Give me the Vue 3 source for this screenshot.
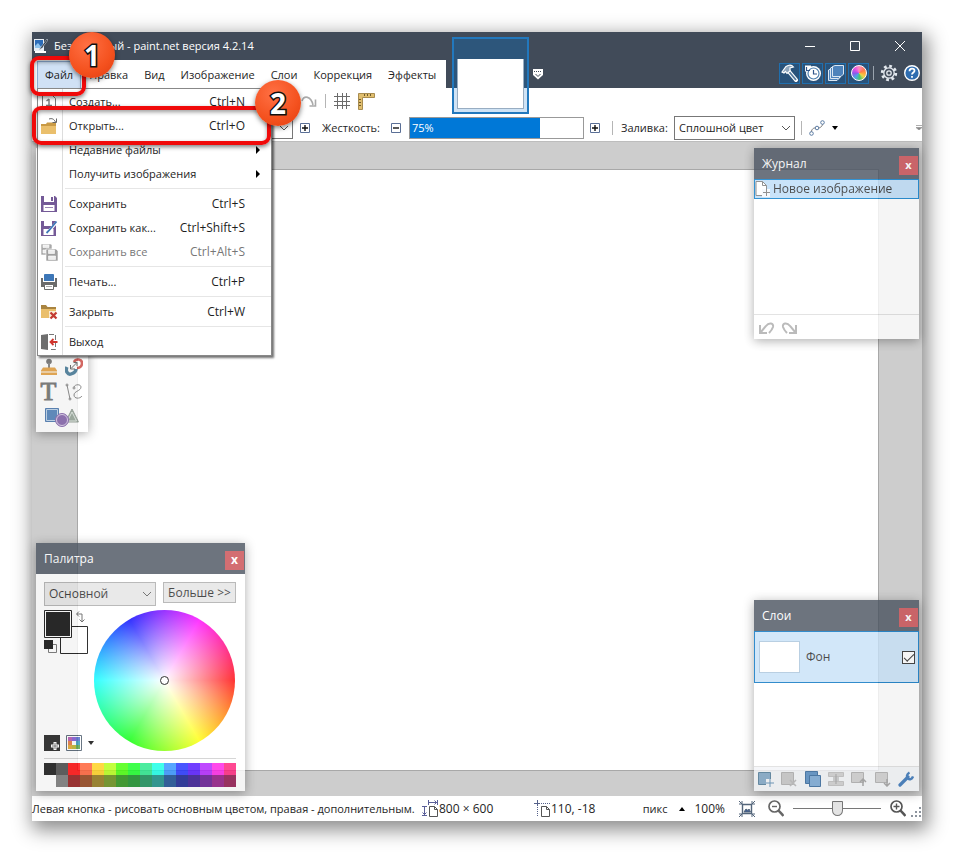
<script setup>
import { ref } from 'vue'

const menus = ['Правка', 'Вид', 'Изображение', 'Слои', 'Коррекция', 'Эффекты']

const fileMenu = [
  { icon: 'new', label: 'Создать...', keys: 'Ctrl+N' },
  { icon: 'open', label: 'Открыть...', keys: 'Ctrl+O' },
  { label: 'Недавние файлы', sub: true },
  { label: 'Получить изображения', sub: true },
  { sep: true },
  { icon: 'save', label: 'Сохранить', keys: 'Ctrl+S' },
  { icon: 'saveAs', label: 'Сохранить как...', keys: 'Ctrl+Shift+S' },
  { icon: 'saveAll', label: 'Сохранить все', keys: 'Ctrl+Alt+S', off: true },
  { sep: true },
  { icon: 'print', label: 'Печать...', keys: 'Ctrl+P' },
  { sep: true },
  { icon: 'close', label: 'Закрыть', keys: 'Ctrl+W' },
  { sep: true },
  { icon: 'exit', label: 'Выход' },
]

const brightRow = ['#0a0a0a', '#404040', '#ff0000', '#ff5a2e', '#ffd016', '#b4ff10', '#40ff00', '#10ff20', '#20e888', '#10ffe6', '#2e90ff', '#1c2cff', '#5010ff', '#b01cff', '#ff1ce6', '#ff1c78']
const darkRow = ['', '#707070', '#8c0c0c', '#8c380c', '#8c700c', '#60880c', '#208c0c', '#0c881c', '#0c8850', '#0c8880', '#0c448c', '#0c188c', '#2c0c8c', '#5c0c8c', '#8c0c7c', '#8c0c44']

const hardness = ref(75)
const zoom = ref(50)
const visible = ref(true)
</script>

<template>
  <div class="page">
    <div class="window">
      <header class="head">
        <div class="titlebar">
          <svg class="logo" width="14" height="16" viewBox="0 0 14 16">
            <rect x="0" y="1" width="10" height="12" fill="#e8eef5" />
            <rect x="1" y="2" width="8" height="8" fill="#2c6cb8" />
            <path d="M1 8l3-3 4 5H1z" fill="#8fc4ee" />
            <path d="M13 1L7 9l-2 3 3-2 6-8z" fill="#1c2430" stroke="#cfd8e2" stroke-width=".6" />
            <path d="M1 14h11" stroke="#fff" stroke-width="2" />
          </svg>
          <h1>Безымянный - paint.net версия 4.2.14</h1>
          <div class="winbtns">
            <button aria-label="Свернуть"><svg width="12" height="12" viewBox="0 0 12 12"><path d="M1 6.500h10" /></svg></button>
            <button aria-label="Развернуть"><svg width="12" height="12" viewBox="0 0 12 12"><path d="M1.500 1.500h9v9h-9z" /></svg></button>
            <button aria-label="Закрыть"><svg width="12" height="12" viewBox="0 0 12 12"><path d="M1 1l10 10M11 1L1 11" /></svg></button>
          </div>
        </div>

        <div class="menurow">
          <nav class="menubar">
            <div class="filewrap">
              <button class="mi active">Файл</button>
              <ul class="dropdown">
                <template v-for="(m, i) in fileMenu" :key="i">
                  <li v-if="m.sep" class="sep"></li>
                  <li v-else>
                    <button class="row" :disabled="m.off">
                      <span class="ico">
                        <svg v-if="m.icon" width="18" height="18" viewBox="0 0 18 18">
                          <g v-if="m.icon === 'new'" fill="none" stroke="#777"><path d="M2.500 1.500h9l4 4v11h-13z" /><path d="M9 6v6M6 12.500h6M6.500 8L9 6" stroke-width="1.400" /></g>
                          <g v-else-if="m.icon === 'open'">
                            <path d="M1 7h5l1-1.500h9V17H1z" fill="#c99a45" /><path d="M1 9h15v8H1z" fill="#eabf6c" />
                            <path d="M9 2c3-1 5 0 6.500 3M16.500 1.500v4h-4" fill="none" stroke="#666" />
                          </g>
                          <g v-else-if="m.icon === 'save'">
                            <path d="M1 1h14l2 2v14H1z" fill="#745a97" /><path d="M4 1h10v6H4z" fill="#fff" /><path d="M11 2h2v4h-2z" fill="#745a97" /><path d="M3.500 10h11v6h-11z" fill="#fff" /><path d="M5 12.500h8" stroke="#9a86b5" />
                          </g>
                          <g v-else-if="m.icon === 'saveAs'">
                            <path d="M1 2h15v15H1z" fill="#745a97" /><path d="M4 2h8v5H4zM3.500 10h10v6h-10z" fill="#fff" /><path d="M17 1L8 11l-2 4 4-2 8-9z" fill="#fff" /><path d="M16.500 2.500L9 11.500 6.500 14" stroke="#3f78b8" stroke-width="1.800" fill="none" />
                          </g>
                          <g v-else-if="m.icon === 'saveAll'" stroke="#fff" stroke-width=".6">
                            <path d="M1 1h10l1 1v10H1z" fill="#a8a8a8" /><path d="M3 2h6v2.500H3zM3 7h6v3H3z" fill="#eee" /><path d="M6 6h10l2 2v10H6z" fill="#a0a0a0" /><path d="M8.500 7h6v3.500h-6zM8.500 13h7v3.500h-7z" fill="#eee" />
                          </g>
                          <g v-else-if="m.icon === 'print'">
                            <path d="M4 1.500L5 1h8l1 .5V8H4z" fill="#3d77b8" /><path d="M1 5h2v4h12V5h2v9H1z" fill="#6b6b6b" /><path d="M4.500 11.500h9v5h-9z" fill="#fff" stroke="#6b6b6b" /><path d="M6 13.500h6" stroke="#aaa" />
                          </g>
                          <g v-else-if="m.icon === 'close'">
                            <path d="M1 2h5l1.500 2H16v3H1z" fill="#a98440" /><path d="M1 6h15v9H1z" fill="#eabf6c" /><path d="M9 8h9v9H9z" fill="#fff" opacity=".7" /><path d="M10.500 9.500l6 6M16.500 9.500l-6 6" stroke="#c33a32" stroke-width="2.200" />
                          </g>
                          <g v-else>
                            <path d="M9 1.500h6.500v15H9" fill="none" stroke="#777" stroke-dasharray="5 2" /><path d="M1 2l7-1v16l-7-1z" fill="#6e6e6e" /><path d="M17.500 9H11M13.500 6L10.500 9l3 3" fill="none" stroke="#d0352d" stroke-width="1.800" />
                          </g>
                        </svg>
                      </span>
                      <span class="lbl">{{ m.label }}</span>
                      <span v-if="m.keys" class="keys">{{ m.keys }}</span>
                      <svg v-if="m.sub" class="arrow" width="6" height="8" viewBox="0 0 6 8"><path d="M1 0l4 4-4 4z" /></svg>
                    </button>
                  </li>
                </template>
              </ul>
            </div>
            <button v-for="m in menus" :key="m" class="mi">{{ m }}</button>
          </nav>

          <div class="thumb"><div class="thumbimg"></div></div>
          <button class="thumbmore" aria-label="Список изображений">
            <svg width="12" height="12" viewBox="0 0 12 12"><path d="M1 1h10v6l-5 4.500L1 7z" fill="#fff" /><path d="M2 3.500h8" stroke="#414b59" stroke-dasharray="1 1" /><path d="M3.500 6L6 8.500 8.500 6" stroke="#414b59" fill="none" /></svg>
          </button>

          <div class="utils">
            <button class="util on" aria-label="Инструменты"><svg width="18" height="18" viewBox="0 0 18 18"><path d="M7.500 7l7.500 9" stroke="#fff" stroke-width="4" stroke-linecap="round" /><path d="M7.500 7l7.500 9" stroke="#54789c" stroke-width="1.800" /><path d="M1 8l4-5.500c3-2 6-1.500 7.500.5L9 4v3L6 9.500 4.500 7.500 3 9z" fill="#8fa6bd" stroke="#fff" stroke-width="1.200" /></svg></button>
            <button class="util on" aria-label="Журнал"><svg width="18" height="18" viewBox="0 0 18 18"><circle cx="9.500" cy="9.500" r="7.500" fill="#fff" /><path d="M1 1.500h6v6H1z" fill="#fff" /><circle cx="9.500" cy="9.500" r="5.500" fill="#fff" stroke="#4d7fae" stroke-width="1.200" /><path d="M9.500 6v4h3.500M2.500 3v3.500h3.500" stroke="#31568a" stroke-width="1.200" fill="none" /></svg></button>
            <button class="util on" aria-label="Слои"><svg width="18" height="18" viewBox="0 0 18 18" stroke="#dbe7f3" stroke-width="1" fill="#4e83bb"><path d="M1.500 16.500V6L5 4.500h8v9l-3 3z" /><path d="M3.500 14.500V4L6.500 2.500h8v9l-3 3z" /><path d="M5.500 12.500V2.500L8 1.500h8.500v8.500L14 12.500z" /></svg></button>
            <button class="util on" aria-label="Палитра"><span class="miniwheel"></span></button>
            <i class="vsep light"></i>
            <button class="util" aria-label="Параметры"><svg width="18" height="18" viewBox="0 0 18 18" fill="none" stroke="#e4e9ef"><circle cx="9" cy="9" r="6.800" stroke-width="2.800" stroke-dasharray="2.700 2.640" /><circle cx="9" cy="9" r="5.200" stroke-width="1.300" /><circle cx="9" cy="9" r="2.200" stroke-width="1.300" /></svg></button>
            <button class="util" aria-label="Справка"><svg width="18" height="18" viewBox="0 0 18 18"><circle cx="9" cy="9" r="7.300" fill="#2f6db0" stroke="#fff" stroke-width="1.400" /><path d="M6.500 7.200c0-3.400 5-3.400 5-.5 0 1.800-2.500 1.800-2.500 3.800M9 12v1.800" fill="none" stroke="#fff" stroke-width="1.800" /></svg></button>
          </div>
        </div>
      </header>

      <div class="tools tools-a">
        <button class="tb" aria-label="Вернуть"><svg width="16" height="16" viewBox="0 0 16 16" fill="none" stroke="#aaa" stroke-width="1.600"><path d="M1 8c2-6 9-5 11 4M14.500 6.500V13H8.500" /></svg></button>
        <i class="vsep"></i>
        <button class="tb" aria-label="Сетка"><svg width="16" height="16" viewBox="0 0 16 16" fill="none" stroke="#6b6b6b"><path d="M3.500 0v16M8.500 0v16M12.500 0v16M0 3.500h16M0 8.500h16M0 12.500h16" /></svg></button>
        <button class="tb" aria-label="Линейки"><svg width="17" height="17" viewBox="0 0 17 17"><path d="M.5.5h16v4h-12v12h-4z" fill="#e0be6e" stroke="#a88c50" /><path d="M6.500 1v2M9.500 1v2M12.500 1v2M1 6.500h2M1 9.500h2M1 12.500h2" stroke="#6f5a2c" /></svg></button>
      </div>

      <div class="tools tools-b">
        <div class="sel brush">
          <select aria-label="Толщина кисти"><option>2</option></select>
          <svg width="10" height="6" viewBox="0 0 10 6"><path d="M1 1l4 4 4-4" /></svg>
        </div>
        <button class="pm" aria-label="Увеличить толщину"><svg width="10" height="10" viewBox="0 0 10 10"><path d="M.5.5h9v9h-9z" stroke="#5a6f96" /><path d="M2 5h6M5 2v6" stroke-width="1.400" /></svg></button>
        <label class="hl" for="hard">Жесткость:</label>
        <button class="pm" aria-label="Уменьшить жесткость"><svg width="10" height="10" viewBox="0 0 10 10"><path d="M.5.5h9v9h-9z" stroke="#5a6f96" /><path d="M2 5h6" stroke-width="1.400" /></svg></button>
        <div class="hard">
          <div class="hardfill" :style="{ width: hardness + '%' }"></div>
          <span>{{ hardness }}%</span>
          <input id="hard" v-model="hardness" type="range" min="0" max="100" />
        </div>
        <button class="pm" aria-label="Увеличить жесткость"><svg width="10" height="10" viewBox="0 0 10 10"><path d="M.5.5h9v9h-9z" stroke="#5a6f96" /><path d="M2 5h6M5 2v6" stroke-width="1.400" /></svg></button>
        <i class="vsep"></i>
        <label class="fl" for="fill">Заливка:</label>
        <div class="sel fillsel">
          <select id="fill"><option>Сплошной цвет</option></select>
          <svg width="10" height="6" viewBox="0 0 10 6"><path d="M1 1l4 4 4-4" /></svg>
        </div>
        <i class="vsep"></i>
        <button class="curve" aria-label="Сглаживание">
          <svg width="16" height="16" viewBox="0 0 16 16" fill="#fff" stroke="#5b7ba3"><path d="M2 13C3 7 6 8 8 8s5 0 6-5" fill="none" stroke="#777" /><circle cx="2.500" cy="13.500" r="1.800" /><circle cx="8" cy="8" r="1.800" /><circle cx="13.500" cy="2.500" r="1.800" /></svg>
          <svg width="6" height="4" viewBox="0 0 6 4"><path d="M0 0h6L3 4z" /></svg>
        </button>
        <svg class="overflow" width="6" height="5" viewBox="0 0 6 5"><path d="M0 .5h6M0 2.500h6L3 5z" stroke="#999" fill="#888" stroke-width=".8" /></svg>
      </div>

      <main class="workspace">
        <div class="canvas"></div>

        <section class="panel toolbox">
          <button aria-label="Штамп"><svg width="18" height="18" viewBox="0 0 18 18"><circle cx="9" cy="3.500" r="2.800" fill="#666" /><path d="M8 5h2v5H8z" fill="#777" /><path d="M3 9.500h12l2 3v1H1v-1zM1 14.500h16V17H1z" fill="#e39a35" /></svg></button>
          <button aria-label="Перекраска"><svg width="18" height="18" viewBox="0 0 18 18" fill="none"><path d="M9 4c2-4 8-3 8 1s-3 5-5 5" stroke="#c8423b" stroke-width="2.600" /><path d="M2 9c-2 4 1 8 4 7s5-3 5-5" stroke="#3b7292" stroke-width="3.400" /><path d="M6 10.500l6-6M12 8V4.500H8.500M5.500 7v4H10" stroke="#555" /></svg></button>
          <button class="ttool" aria-label="Текст">T</button>
          <button aria-label="Линия или кривая"><svg width="18" height="18" viewBox="0 0 18 18" fill="none" stroke="#777"><path d="M2 2l3 14M9 4c1-3 7-3 7 0 0 4-7 4-7 8 0 4 6 4 8 1" /><circle cx="2" cy="2" r="1" /><circle cx="5" cy="16" r="1" /><circle cx="9" cy="5" r="1" /></svg></button>
          <button class="wide" aria-label="Фигуры"><svg width="36" height="20" viewBox="0 0 36 20"><path d="M1.500 1.500h13v13h-13z" fill="#4479b5" stroke="#3d6ea8" /><path d="M2.500 2.500h11v11h-11z" fill="none" stroke="#b9d0e8" /><path d="M28 2l6.500 13h-13z" fill="#8fa092" stroke="#8a968c" /><path d="M28 5l4.500 9h-9z" fill="none" stroke="#dde5de" /><circle cx="18" cy="13" r="6.500" fill="#7d5aa6" stroke="#7d5aa6" /><circle cx="18" cy="13" r="5.500" fill="none" stroke="#d5c7e5" /></svg></button>
        </section>

        <section class="panel journal">
          <div class="phead"><h2>Журнал</h2><button class="x" aria-label="Закрыть журнал">x</button></div>
          <div class="hist">
            <svg width="16" height="18" viewBox="0 0 16 18"><path d="M1 1.500h6.500l4 4V15.500H1z" fill="#fff" stroke="#777" /><path d="M7.500 1.500v4h4" fill="none" stroke="#777" /><path d="M7 9h8v8H7z" fill="#f4f9fe" /><path d="M11.500 9v7M8 12.500h7" stroke="#777" /></svg>
            <span>Новое изображение</span>
          </div>
          <div class="pfoot jfoot">
            <button aria-label="Отменить"><svg width="17" height="14" viewBox="0 0 17 14"><path d="M2 4v8h7M2.500 11.500L8 5c3-4 8-3 7 1-1 3-2 4-4 6" /></svg></button>
            <button aria-label="Вернуть"><svg width="17" height="14" viewBox="0 0 17 14"><path d="M15 4v8H8M14.500 11.500L9 5C6 1 1 2 2 6c1 3 2 4 4 6" /></svg></button>
          </div>
        </section>

        <section class="panel palette">
          <div class="phead"><h2>Палитра</h2><button class="x" aria-label="Закрыть палитру">x</button></div>
          <div class="pbody">
            <div class="prow">
              <div class="sel basesel">
                <select aria-label="Цвет"><option>Основной</option></select>
                <svg width="10" height="6" viewBox="0 0 10 6"><path d="M1 1l4 4 4-4" /></svg>
              </div>
              <button class="more">Больше &gt;&gt;</button>
            </div>
            <div class="colors">
              <div class="pleft">
                <svg width="44" height="44" viewBox="0 0 44 44">
                  <path d="M16.500 16.500h27v27h-27z" fill="#fff" stroke="#000" />
                  <path d="M.5.5h27v27H.5z" fill="#fff" stroke="#000" /><path d="M2 2h24v24H2z" fill="#000" />
                  <path d="M4.500 34.500h8v8h-8z" fill="#fff" stroke="#666" /><path d="M0 30h9v9H0z" fill="#000" />
                  <path d="M33 4h5v8M35 1.500L32.500 4 35 6.500M35.500 9.500L38 12l2.500-2.500" fill="none" stroke="#555" />
                </svg>
                <div class="pactions">
                  <button aria-label="Добавить цвет"><svg width="16" height="16" viewBox="0 0 16 16"><path d="M0 0h16v16H0z" fill="#111" /><path d="M11 7v8M7 11h8" stroke="#fff" stroke-width="3" /><path d="M11 8v6M8 11h6" stroke="#666" /></svg></button>
                  <button aria-label="Палитры"><svg width="16" height="16" viewBox="0 0 16 16"><path d="M.5.5h15v15H.5z" fill="#fff" stroke="#456" /><path d="M2 2h4v4H2z" fill="#b04aa8" /><path d="M6 2h4v4H6z" fill="#7a4fd0" /><path d="M10 2h4v4h-4z" fill="#4a66c8" /><path d="M2 6h4v4H2z" fill="#e07030" /><path d="M10 6h4v4h-4z" fill="#2e93b8" /><path d="M2 10h4v4H2z" fill="#e0a020" /><path d="M6 10h4v4H6z" fill="#b8b020" /><path d="M10 10h4v4h-4z" fill="#50a040" /></svg></button>
                  <svg width="6" height="4" viewBox="0 0 6 4"><path d="M0 0h6L3 4z" /></svg>
                </div>
              </div>
              <div class="wheel"><i></i></div>
            </div>
            <div class="swatches">
              <i v-for="(c, i) in brightRow.concat(darkRow)" :key="i" :style="{ background: c }"></i>
            </div>
          </div>
        </section>

        <section class="panel layers">
          <div class="phead"><h2>Слои</h2><button class="x" aria-label="Закрыть слои">x</button></div>
          <label class="layer">
            <span class="lthumb"></span>
            <span>Фон</span>
            <input v-model="visible" type="checkbox" />
          </label>
          <div class="pfoot lfoot">
            <button aria-label="Добавить слой"><svg width="16" height="16" viewBox="0 0 16 16"><path d="M.5 1.500h12v12H.5z" fill="#7ba3c4" stroke="#4b7896" /><path d="M8 8h8v8H8z" fill="#f4f6f8" /><path d="M12 8v8M8 12h8" stroke="#5588b0" /></svg></button>
            <button aria-label="Удалить слой"><svg width="16" height="16" viewBox="0 0 16 16"><path d="M.5 1.500h12v12H.5z" fill="#c4c4c4" stroke="#aaa" /><path d="M9 9l6 6M15 9l-6 6" stroke="#b4b4b4" stroke-width="1.600" /></svg></button>
            <button aria-label="Дублировать слой"><svg width="16" height="16" viewBox="0 0 16 16"><path d="M.5.5h12v12H.5z" fill="#4f88bf" stroke="#2d6298" /><path d="M4.500 4.500h11v11h-11z" fill="#74a5d2" stroke="#2d6298" /></svg></button>
            <button aria-label="Объединить слои"><svg width="16" height="16" viewBox="0 0 16 16" fill="#ccc" stroke="#bbb"><path d="M.5 1.500h15v4H.5zM.5 10.500h15v4H.5z" /><path d="M8 3v10M5 7h6M5 9h6" stroke="#999" /></svg></button>
            <button aria-label="Слой вверх"><svg width="16" height="16" viewBox="0 0 16 16"><path d="M.5 1.500h12v10H.5z" fill="#ccc" stroke="#aaa" /><path d="M12 15V8M9 11l3-3 3 3" fill="none" stroke="#999" stroke-width="1.500" /></svg></button>
            <button aria-label="Слой вниз"><svg width="16" height="16" viewBox="0 0 16 16"><path d="M.5 1.500h12v10H.5z" fill="#ccc" stroke="#aaa" /><path d="M12 8v7M9 12l3 3 3-3" fill="none" stroke="#999" stroke-width="1.500" /></svg></button>
            <button aria-label="Свойства слоя"><svg width="16" height="16" viewBox="0 0 16 16" fill="none" stroke="#2b6cb3"><path d="M2 14l8-8" stroke-width="3.200" stroke-linecap="round" /><path d="M11.500 1.500C8.500 3 8.500 6 10 7.500s4 1 5-2" stroke-width="2.400" /></svg></button>
          </div>
        </section>
      </main>

      <footer class="status">
        <span class="hint">Левая кнопка - рисовать основным цветом, правая - дополнительным.</span>
        <span class="size"><svg width="17" height="17" viewBox="0 0 17 17" fill="none" stroke="#555"><path d="M7.500 6.500h5l3 3v7h-8zM12.500 6.500v3h3" /><path d="M6.500 0v5M15.500 0v5M7 2.500h8M12.500.5l2 2-2 2M0 6.500h5M0 15.500h5M2.500 7v8M.5 12.500l2 2 2-2" stroke="#5a5f98" /></svg>800 × 600</span>
        <span class="pos"><svg width="17" height="17" viewBox="0 0 17 17" fill="none" stroke="#555"><path d="M7.500 6.500h5l3 3v7h-8zM12.500 6.500v3h3" /><path d="M0 3.500h6M3.500 0v6" stroke="#55618a" /><path d="M7 3.500h9M3.500 7v9" stroke="#55618a" stroke-dasharray="1 1" /></svg>110, -18</span>
        <button class="units">пикс <svg width="6" height="4" viewBox="0 0 6 4"><path d="M0 4h6L3 0z" /></svg></button>
        <span class="pct">100%</span>
        <button class="fit" aria-label="По размеру окна"><svg width="16" height="16" viewBox="0 0 16 16" fill="none" stroke="#53657a"><path d="M3.500 3.500h9v9h-9z" stroke-width="1.400" /><path d="M0 0l3 3M16 0l-3 3M0 16l3-3M16 16l-3-3M3 0v3H0M13 0v3h3M3 16v-3H0M13 16v-3h3" /><path d="M5 11l2-3 2 1.500 1-1.500 1.500 3z" fill="#3c5c94" /></svg></button>
        <button class="zo" aria-label="Уменьшить"><svg width="16" height="17" viewBox="0 0 16 17" fill="none" stroke="#666"><circle cx="6.500" cy="6.500" r="5.500" stroke-width="1.700" /><path d="M10.500 10.500l5 5.500" stroke-width="2.600" /><path d="M4 6.500h5" stroke-width="1.400" /></svg></button>
        <input v-model="zoom" class="zoom" type="range" min="0" max="100" aria-label="Масштаб" />
        <button class="zi" aria-label="Увеличить"><svg width="16" height="17" viewBox="0 0 16 17" fill="none" stroke="#555"><circle cx="6.500" cy="6.500" r="5.500" stroke-width="1.700" /><path d="M10.500 10.500l5 5.500" stroke-width="2.600" /><path d="M3.500 6.500h6M6.500 3.500v6" stroke-width="1.400" /></svg></button>
        <svg class="grip" width="11" height="11" viewBox="0 0 11 11" fill="#8d949e"><path d="M8 0h2v2H8zM8 4h2v2H8zM4 4h2v2H4zM8 8h2v2H8zM4 8h2v2H4zM0 8h2v2H0z" /></svg>
      </footer>

      <div class="mark mark-one"></div>
      <div class="mark mark-two"></div>
      <div class="badge badge-one">1</div>
      <div class="badge badge-two">2</div>
    </div>
  </div>
</template>

<style>
body {
  background: #fff;
}
</style>

<style scoped>
* {
  box-sizing: border-box;
}
.page {
  height: 100vh;
  min-height: 700px;
  padding: 32px;
  font: 11px/16px "Open Sans", "Noto Sans", sans-serif;
  color: #1e1e1e;
}
button,
select {
  font: inherit;
  color: inherit;
  border: 0;
  padding: 0;
  margin: 0;
  background: none;
}
button {
  display: flex;
  align-items: center;
  justify-content: center;
}
h1,
h2 {
  margin: 0;
  font-size: 12px;
  font-weight: 400;
}
h1 {
  font-size: 11px;
}
svg {
  display: block;
  flex: none;
}
.window {
  position: relative;
  display: flex;
  flex-direction: column;
  height: 100%;
  background: #fff;
  box-shadow: 3px 6px 18px 3px rgba(0, 0, 0, 0.45);
}
.head {
  position: relative;
  z-index: 2;
  background: #414b59;
  color: #fff;
}
.titlebar {
  display: flex;
  align-items: center;
  height: 27px;
  padding-left: 2px;
}
.logo {
  margin-right: 6px;
}
.titlebar h1 {
  flex: 1;
}
.winbtns {
  display: flex;
}
.winbtns button {
  width: 45px;
  height: 24px;
}
.winbtns svg {
  fill: none;
  stroke: #fff;
}
.menurow {
  position: relative;
  display: flex;
  justify-content: space-between;
  height: 28px;
  margin-top: 1px;
}
.menubar {
  display: flex;
  background: #fff;
  color: #1e1e1e;
  padding: 1px 2px 0 5px;
}
.filewrap {
  position: relative;
}
.mi {
  height: 27px;
  padding: 0 8px;
}
.mi.active {
  background: #d0e1f5;
  border: 1px solid #8fb0d8;
  border-bottom: 0;
  padding: 0 7px;
}
.dropdown {
  position: absolute;
  top: 27px;
  left: 0;
  width: 235px;
  margin: 0;
  padding: 1px 0;
  list-style: none;
  background: #fff linear-gradient(#ddd, #ddd) 24px 0 / 1px 100% no-repeat;
  border: 1px solid #888;
  box-shadow: 2px 2px 2px rgba(0, 0, 0, 0.55);
}
.sep {
  height: 6px;
  padding: 2px 0 0 27px;
}
.sep::before {
  content: "";
  display: block;
  height: 1px;
  background: #e6e6e6;
}
.row {
  width: 100%;
  height: 24px;
  justify-content: flex-start;
  padding-right: 10px;
}
.row:disabled {
  color: #777;
}
.ico {
  width: 31px;
  padding-left: 2px;
}
.lbl {
  flex: 1;
  text-align: left;
}
.keys {
  padding-right: 16px;
  font-size: 12px;
}
.thumb {
  position: absolute;
  top: -23px;
  left: 420px;
  width: 77px;
  height: 77px;
  padding: 20px 3px 3px;
  background: linear-gradient(#2d567b 49px, #cfe3f5 49px);
  border: 2px solid #2278bd;
}
.thumbimg {
  height: 100%;
  background: #fff;
  border: 1px solid #98adc2;
  border-top: 0;
}
.thumbmore {
  position: absolute;
  left: 500px;
  top: 8px;
}
.utils {
  display: flex;
  align-items: center;
  gap: 2px;
  height: 26px;
}
.util {
  width: 21px;
  height: 21px;
}
.util.on {
  background: #29527a;
  border: 1px solid #206fae;
}
.miniwheel {
  width: 16px;
  height: 16px;
  border-radius: 50%;
  border: 1px solid #fff;
  background: conic-gradient(#ff8ac0, #ff7a4d 60deg, #ffb03d 100deg, #e8d84d 130deg, #4dc46a 170deg, #4aa8e8 220deg, #8c5be8 265deg, #e04de8 310deg, #ff8ac0);
}
.vsep {
  width: 1px;
  height: 14px;
  background: #b5b5b5;
}
.vsep.light {
  margin: 0 2px;
  background: #9aa3ae;
}
.tools {
  display: flex;
  align-items: center;
  height: 27px;
}
.tools-a {
  height: 26px;
  padding-left: 269px;
  gap: 8px;
}
.tb {
  width: 16px;
  height: 20px;
}
.tools-b {
  padding-left: 201px;
}
.brush {
  width: 60px;
}
.pm {
  width: 10px;
  height: 10px;
}
.brush + .pm {
  margin-left: 7px;
}
.pm svg {
  fill: none;
  stroke: #111;
}
.hl {
  width: 69px;
  margin-left: 12px;
}
.hard {
  position: relative;
  width: 175px;
  height: 22px;
  margin: 0 6px 0 8px;
  border: 1px solid #999;
}
.hardfill {
  height: 100%;
  background: #0078d7;
}
.hard span {
  position: absolute;
  left: 2px;
  top: 2px;
  color: #fff;
}
.hard input {
  position: absolute;
  inset: 0;
  width: 100%;
  height: 100%;
  margin: 0;
  opacity: 0;
}
.tools-b .vsep {
  margin: 0 8px 0 12px;
}
.fl {
  width: 53px;
}
.sel {
  position: relative;
  display: flex;
  align-items: center;
}
.sel select {
  appearance: none;
  width: 100%;
  height: 24px;
  padding-left: 4px;
  border: 1px solid #777;
}
.sel.brush select {
  height: 22px;
}
.sel svg {
  position: absolute;
  right: 4px;
  fill: none;
  stroke: #555;
}
.fillsel {
  width: 121px;
}
.tools-b .fillsel + .vsep {
  margin: 0 7px 0 6px;
}
.curve {
  gap: 7px;
}
.overflow {
  margin-left: auto;
}
.workspace {
  position: relative;
  display: flex;
  flex: 1;
  padding: 28px 44px 26px 46px;
  background: #cdcdcd;
  border-top: 1px solid #bdbdbd;
}
.canvas {
  flex: 1;
  background: #fff;
  outline: 1px solid #a8a8a8;
}
.panel {
  position: absolute;
  display: flex;
  flex-direction: column;
  background: #fff;
  opacity: 0.8;
  box-shadow: 0 2px 10px rgba(0, 0, 0, 0.4);
}
.toolbox {
  left: 4px;
  top: 6px;
  width: 52px;
  height: 284px;
  display: grid;
  grid-template-columns: 25px 25px;
  align-content: end;
  padding-bottom: 3px;
}
.toolbox button {
  height: 25px;
}
.ttool {
  font: 26px/25px "Liberation Serif", serif;
  color: #666;
  -webkit-text-stroke: 1px #666;
}
.wide {
  grid-column: 1 / 3;
  padding-left: 2px;
}
.phead {
  display: flex;
  align-items: center;
  justify-content: space-between;
  height: 31px;
  flex: none;
  padding: 0 1px 0 8px;
  background: #49525f;
  color: #fff;
}
.x {
  width: 19px;
  height: 19px;
  margin-top: 4px;
  padding-bottom: 2px;
  background: #c94a50;
  font-weight: 700;
}
.journal {
  top: 6px;
  right: 3px;
  width: 165px;
  height: 191px;
}
.hist {
  display: flex;
  align-items: center;
  height: 20px;
  gap: 2px;
  border: 1px solid #0078c8;
  background: #bcdcf8;
  font-size: 12px;
}
.pfoot {
  display: flex;
  align-items: center;
  margin-top: auto;
  height: 25px;
  border-top: 1px solid #ddd;
}
.jfoot {
  gap: 6px;
  padding: 2px 4px 0;
}
.jfoot svg {
  fill: none;
  stroke: #aaa;
  stroke-width: 2;
}
.palette {
  left: 4px;
  bottom: 5px;
  width: 209px;
  height: 248px;
  font-size: 12px;
}
.pbody {
  display: flex;
  flex-direction: column;
  flex: 1;
  padding: 8px 9px 4px 8px;
}
.prow {
  display: flex;
  align-items: flex-start;
  gap: 7px;
}
.basesel {
  flex: 1;
}
.basesel select,
.more {
  background: #e4e4e4;
  border: 1px solid #aaa;
}
.more {
  width: 73px;
  height: 21px;
}
.colors {
  display: flex;
  flex: 1;
  justify-content: space-between;
  padding: 4px 1px 7px 0;
}
.pleft {
  display: flex;
  flex-direction: column;
  justify-content: space-between;
  width: 50px;
}
.pactions {
  display: flex;
  align-items: center;
  gap: 6px;
}
.wheel {
  display: flex;
  align-items: center;
  justify-content: center;
  width: 141px;
  height: 141px;
  border-radius: 50%;
  background: radial-gradient(circle closest-side, #fff, rgba(255, 255, 255, 0.5) 50%, rgba(255, 255, 255, 0) 100%), conic-gradient(from 90deg, #f00, #ff0, #0f0, #0ff, #00f, #f0f, #f00);
}
.wheel i {
  width: 9px;
  height: 9px;
  border: 1px solid #000;
  border-radius: 50%;
  background: #fff;
}
.swatches {
  display: grid;
  grid-template-columns: repeat(16, 1fr);
  grid-auto-rows: 12px;
  padding-top: 4px;
  border-top: 1px solid #ccc;
}
.layers {
  right: 3px;
  bottom: 5px;
  width: 165px;
  height: 191px;
}
.layer {
  display: flex;
  align-items: center;
  gap: 6px;
  height: 52px;
  padding: 0 3px 0 4px;
  border: 1px solid #0070c0;
  background: #c8e2f8;
  font-size: 12px;
}
.lthumb {
  width: 41px;
  height: 32px;
  background: #fff;
  border: 1px solid #a8c4dc;
}
.layer input {
  appearance: none;
  width: 13px;
  height: 13px;
  margin: 0 0 0 auto;
  border: 1px solid #222;
  background: #fff;
  display: grid;
  place-items: center;
}
.layer input:checked::before {
  content: "";
  width: 9px;
  height: 4px;
  border: solid #222;
  border-width: 0 0 1px 1px;
  transform: translateY(-1px) rotate(-45deg);
}
.lfoot {
  justify-content: space-between;
  padding: 0 5px 0 4px;
  background: #f3f5f8;
}
.status {
  display: flex;
  align-items: center;
  height: 25px;
  flex: none;
}
.hint {
  width: 390px;
  white-space: nowrap;
}
.size,
.pos {
  display: flex;
  align-items: center;
  font-size: 12px;
}
.size {
  width: 112px;
}
.pos {
  flex: 1;
}
.units {
  gap: 12px;
}
.pct {
  margin: 0 14px 0 9px;
  font-size: 12px;
}
.zo {
  margin-left: 13px;
}
.zoom {
  appearance: none;
  width: 88px;
  height: 16px;
  margin: 0 9px;
  background: linear-gradient(#777, #777) 0 50% / 100% 1px no-repeat;
}
.zoom::-webkit-slider-thumb {
  appearance: none;
  width: 11px;
  height: 15px;
  border: 1px solid #777;
  border-radius: 1px 1px 6px 6px;
  background: #e4e4e4;
}
.grip {
  margin: 8px 0 0 5px;
}
.mark {
  position: absolute;
  z-index: 3;
  border: 4px solid #f00a0a;
  border-radius: 9px;
  box-shadow: 0 2px 4px rgba(0, 0, 0, 0.5), inset 0 2px 4px rgba(0, 0, 0, 0.4);
  pointer-events: none;
}
.mark-one {
  left: -2px;
  top: 24px;
  width: 56px;
  height: 40px;
}
.mark-two {
  left: 0;
  top: 74px;
  width: 239px;
  height: 39px;
}
.badge {
  position: absolute;
  z-index: 4;
  display: flex;
  align-items: center;
  justify-content: center;
  width: 46px;
  height: 46px;
  border-radius: 50%;
  background: radial-gradient(circle at 40% 30%, #ff7044, #f4511e 60%, #e03c10);
  box-shadow: 0 2px 5px rgba(0, 0, 0, 0.5);
  color: #fff;
  font: 700 28px/46px "Open Sans", sans-serif;
  -webkit-text-stroke: 3px #111;
  paint-order: stroke fill;
}
.badge-one {
  left: 37px;
  top: 0;
}
.badge-two {
  left: 223px;
  top: 48px;
}
</style>
